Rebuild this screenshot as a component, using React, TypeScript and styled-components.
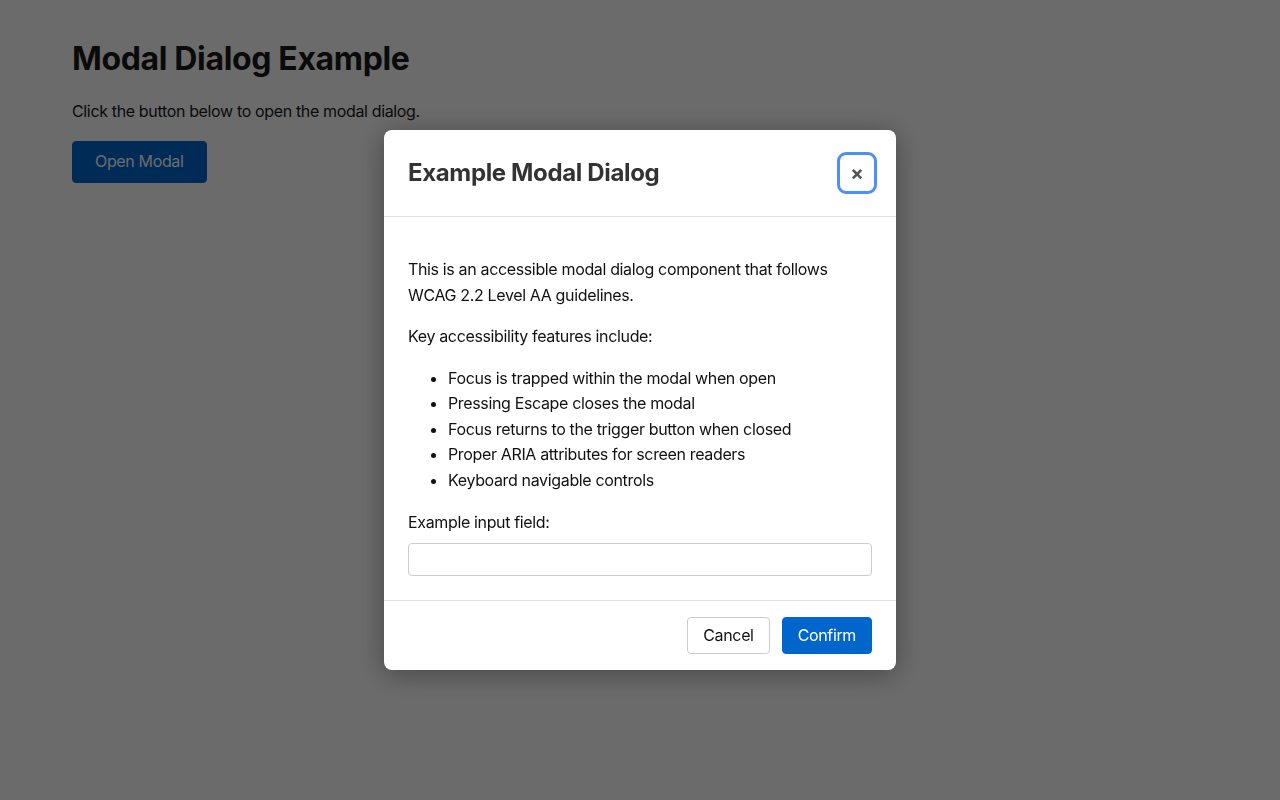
import styled, { createGlobalStyle } from 'styled-components';

const GlobalStyle = createGlobalStyle`
    *{
        box-sizing: border-box;
    }
    body{
        margin:0;
        font-family: Inter, "Noto Sans", sans-serif;
        letter-spacing: -0.022em;
        color:#1a1a1a;
        background-color: #fff;
    }
`;

const Page = styled.main`
    padding: 40px 72px;
    min-height: 100vh;
`;
const Title = styled.h1`
    font-size: 32px;
    line-height: 1.2;
    margin: 0 0 21px;
`;
const Intro = styled.p`
    font-size: 16px;
    line-height: 1.6;
    margin: 0 0 16px;
`;
const Button = styled.button<{ $variant?: 'primary' | 'secondary' }>`
    font-family: inherit;
    letter-spacing: inherit;
    font-size: 16px;
    line-height: 1.2;
    border-radius: 4px;
    cursor: pointer;
    padding: 8px 15px;
    border: 1px solid ${props => props.$variant === 'secondary' ? '#ccc' : '#0066cc'};
    background-color: ${props => props.$variant === 'secondary' ? '#fff' : '#0066cc'};
    color: ${props => props.$variant === 'secondary' ? '#111' : '#fff'};
`;
const OpenButton = styled(Button)`
    height: 42px;
    padding: 0 22px;
`;

const Overlay = styled.div`
    position: fixed;
    inset: 0;
    background-color: rgba(0, 0, 0, 0.58);
    display: flex;
    justify-content: center;
    align-items: center;
`;
const Dialog = styled.div`
    width: 512px;
    background-color: #fff;
    border-radius: 8px;
    box-shadow: 0 4px 28px rgba(0, 0, 0, 0.35);
    overflow: hidden;
`;
const DialogHeader = styled.header`
    display: flex;
    justify-content: space-between;
    align-items: center;
    padding: 24px;
    border-bottom: 1px solid #e0e0e0;
`;
const DialogTitle = styled.h2`
    margin: 0;
    font-size: 24px;
    line-height: 1.6;
    color: #333;
`;
const CloseButton = styled.button`
    width: 30px;
    height: 32px;
    padding: 0;
    border: 0;
    border-radius: 4px;
    background: transparent;
    color: #555;
    font-family: inherit;
    font-size: 20px;
    font-weight: 700;
    line-height: 1;
    cursor: pointer;
    outline: 3px solid #4d8ff8;
    outline-offset: 2px;
`;
const DialogBody = styled.div`
    padding: 24px;
    font-size: 16px;
    line-height: 1.6;
    color: #111;
`;
const Text = styled.p`
    margin: 16px 0;
`;
const FeatureList = styled.ul`
    margin: 16px 0;
    padding-left: 40px;
`;
const Label = styled.label`
    display: block;
    margin-bottom: 8px;
`;
const Input = styled.input`
    display: block;
    width: 100%;
    height: 33px;
    padding: 6px 8px;
    font-family: inherit;
    font-size: 16px;
    border: 1px solid #ccc;
    border-radius: 4px;
`;
const DialogFooter = styled.footer`
    display: flex;
    justify-content: flex-end;
    gap: 12px;
    padding: 16px 24px;
    border-top: 1px solid #e0e0e0;
`;

const features = [
    'Focus is trapped within the modal when open',
    'Pressing Escape closes the modal',
    'Focus returns to the trigger button when closed',
    'Proper ARIA attributes for screen readers',
    'Keyboard navigable controls',
];

function App(){
    return (
        <>
            <GlobalStyle />
            <Page>
                <Title>Modal Dialog Example</Title>
                <Intro>Click the button below to open the modal dialog.</Intro>
                <OpenButton>Open Modal</OpenButton>
            </Page>
            <Overlay>
                <Dialog role="dialog" aria-modal="true" aria-labelledby="modal-title">
                    <DialogHeader>
                        <DialogTitle id="modal-title">Example Modal Dialog</DialogTitle>
                        <CloseButton aria-label="Close modal">&times;</CloseButton>
                    </DialogHeader>
                    <DialogBody>
                        <Text>This is an accessible modal dialog component that follows WCAG 2.2 Level AA guidelines.</Text>
                        <Text>Key accessibility features include:</Text>
                        <FeatureList>
                            {features.map(item => (
                                <li key={item}>{item}</li>
                            ))}
                        </FeatureList>
                        <Label htmlFor="example-input">Example input field:</Label>
                        <Input id="example-input" type="text" />
                    </DialogBody>
                    <DialogFooter>
                        <Button $variant="secondary">Cancel</Button>
                        <Button>Confirm</Button>
                    </DialogFooter>
                </Dialog>
            </Overlay>
        </>
    )
}
export default App;
